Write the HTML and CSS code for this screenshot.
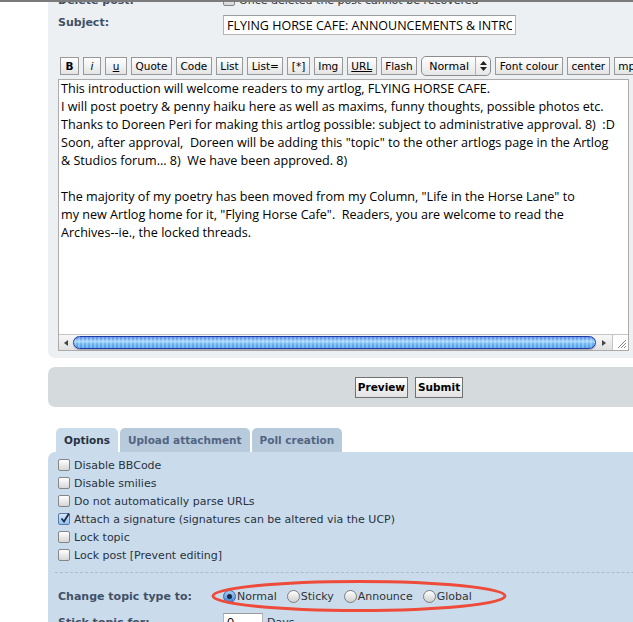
FILE: index.html
```html
<!DOCTYPE html>
<html lang="en">
<head>
  <meta charset="UTF-8" />
  <title>Post a new topic</title>
  <link rel="stylesheet" href="styles.css">
</head>
<body>

  <div class="viewport">
    <div class="page">

      <form class="post-panel">
        <div class="field field--cut">
          <span class="label">Delete post:</span>
          <span class="control"><span class="checkbox"></span>Once deleted the post cannot be recovered</span>
        </div>

        <div class="field field--subject">
          <label class="label" for="subject">Subject:</label>
          <input class="inputbox" id="subject" type="text" value="FLYING HORSE CAFE: ANNOUNCEMENTS &amp; INTRODUCTION">
        </div>

        <div class="toolbar">
          <button type="button" class="btn btn--b">B</button>
          <button type="button" class="btn btn--i">i</button>
          <button type="button" class="btn btn--u">u</button>
          <button type="button" class="btn">Quote</button>
          <button type="button" class="btn">Code</button>
          <button type="button" class="btn">List</button>
          <button type="button" class="btn">List=</button>
          <button type="button" class="btn">[*]</button>
          <button type="button" class="btn">Img</button>
          <button type="button" class="btn btn--url">URL</button>
          <button type="button" class="btn">Flash</button>
          <span class="select">
            <span class="select__value">Normal</span>
            <span class="select__arrows">
              <svg width="7" height="10" viewBox="0 0 7 10"><polygon points="3.5,0 7,4 0,4" /><polygon points="0,6 7,6 3.5,10" /></svg>
            </span>
          </span>
          <button type="button" class="btn">Font colour</button>
          <button type="button" class="btn">center</button>
          <button type="button" class="btn">mp3</button>
        </div>

        <div class="editor">
<div class="editor__text">This introduction will welcome readers to my artlog, FLYING HORSE CAFE.
I will post poetry &amp; penny haiku here as well as maxims, funny thoughts, possible photos etc.
Thanks to Doreen Peri for making this artlog possible: subject to administrative approval. 8)  :D
Soon, after approval,  Doreen will be adding this "topic" to the other artlogs page in the Artlog
&amp; Studios forum... 8)  We have been approved. 8)

The majority of my poetry has been moved from my Column, "Life in the Horse Lane" to
my new Artlog home for it, "Flying Horse Cafe".  Readers, you are welcome to read the
Archives--ie., the locked threads.</div>
          <div class="hscroll">
            <span class="hscroll__arrow hscroll__arrow--left"></span>
            <span class="hscroll__thumb"></span>
            <span class="hscroll__arrow hscroll__arrow--right"></span>
            <span class="hscroll__grip">
              <svg width="9" height="9" viewBox="0 0 9 9"><path d="M1 9 L9 1 M4 9 L9 4 M7 9 L9 7" /></svg>
            </span>
          </div>
        </div>
      </form>

      <div class="submit-panel">
        <button type="button" class="button2">Preview</button>
        <button type="button" class="button2">Submit</button>
      </div>

      <ul class="tabs">
        <li class="tab tab--active">Options</li>
        <li class="tab">Upload attachment</li>
        <li class="tab">Poll creation</li>
      </ul>

      <div class="options-panel">
        <div class="check-row"><span class="checkbox"></span>Disable BBCode</div>
        <div class="check-row"><span class="checkbox"></span>Disable smilies</div>
        <div class="check-row"><span class="checkbox"></span>Do not automatically parse URLs</div>
        <div class="check-row">
          <span class="checkbox checkbox--on">
            <svg width="10" height="10" viewBox="0 0 10 10"><path d="M1.5 5.5 L4 8.5 L9 0.5" /></svg>
          </span>Attach a signature (signatures can be altered via the UCP)
        </div>
        <div class="check-row"><span class="checkbox"></span>Lock topic</div>
        <div class="check-row"><span class="checkbox"></span>Lock post [Prevent editing]</div>

        <hr class="options-sep">

        <div class="field field--type">
          <span class="label">Change topic type to:</span>
          <span class="radios">
            <span class="radio-item"><span class="radio radio--on"></span>Normal</span>
            <span class="radio-item"><span class="radio"></span>Sticky</span>
            <span class="radio-item"><span class="radio"></span>Announce</span>
            <span class="radio-item"><span class="radio"></span>Global</span>
          </span>
        </div>

        <div class="field field--stick">
          <span class="label">Stick topic for:</span>
          <span class="control"><input class="inputbox inputbox--small" type="text" value="0"> Days</span>
        </div>

        <!-- hand-drawn ring around the topic type choices -->
        <svg class="ring" width="299" height="35" viewBox="0 0 299 35">
          <ellipse cx="149" cy="17" rx="146" ry="14.5" />
        </svg>
      </div>

    </div>
  </div>

</body>
</html>
```

FILE: styles.css
```css
html, body {
  margin: 0;
  padding: 0;
}

body {
  background: #fff;
  border-top: 2px solid #7b7b7b;
  font: 11px "DejaVu Sans", Verdana, sans-serif;
  color: #333;
}

.viewport {
  height: 620px;
  overflow: hidden;
}

.page {
  width: 722px;
  padding-left: 48px;
}

/* top panel: subject, bbcode bar, message box */
.post-panel {
  margin: 0;
  background: #ecf0f3;
  border-radius: 0 0 0 7px;
  padding: 0 0 7px 10px;
}

.field {
  display: grid;
  grid-template-columns: 165px auto;
  align-items: center;
}

.field--cut {
  height: 18px;
  margin-top: -11px;
}

.field--subject {
  margin-top: 6px;
  align-items: start;
}

.field--subject .label {
  padding-top: 1px;
}

.label {
  font-weight: bold;
  color: #425067;
}

.control {
  display: flex;
  align-items: center;
  gap: 4px;
}

.inputbox {
  box-sizing: border-box;
  width: 293px;
  height: 20px;
  margin: 0;
  padding: 0 3px;
  border: 1px solid #b4b4b4;
  border-top-color: #9c9c9c;
  background: #fff;
  font: 12.5px "Open Sans", sans-serif;
  color: #000;
  outline: none;
}

.inputbox--small {
  width: 40px;
  height: 18px;
}

.toolbar {
  display: flex;
  align-items: center;
  gap: 4px;
  margin-top: 21px;
  padding-left: 2px;
  white-space: nowrap;
}

.btn {
  box-sizing: border-box;
  height: 18px;
  margin: 0;
  padding: 0 3.5px;
  border: 1px solid #999;
  border-radius: 0;
  background: linear-gradient(#fff, #e4e4e4);
  font: 10.5px "DejaVu Sans", sans-serif;
  color: #000;
}

.btn--b { width: 19px; font-weight: bold; }
.btn--i { width: 18px; font-style: italic; }
.btn--u { width: 22px; text-decoration: underline; }
.btn--url { text-decoration: underline; }

.select {
  box-sizing: border-box;
  display: flex;
  align-items: center;
  width: 70px;
  height: 20px;
  border: 1px solid #8c8c8c;
  border-radius: 5px;
  background: linear-gradient(#fefefe, #e6e6e6);
  font: 11px "DejaVu Sans", sans-serif;
  color: #000;
}

.select__value {
  flex: 1;
  padding-left: 7px;
}

.select__arrows {
  display: flex;
  align-items: center;
  justify-content: center;
  width: 14px;
  height: 100%;
  border-left: 1px solid #b0b0b0;
}

.select__arrows svg {
  fill: #222;
}

.editor {
  box-sizing: border-box;
  display: flex;
  flex-direction: column;
  width: 571px;
  height: 272px;
  margin-top: 3px;
  border: 1px solid #ababab;
  background: #fff;
}

.editor__text {
  flex: 1;
  padding: 0 2px;
  font: 12.6px/18px "Open Sans", sans-serif;
  color: #000;
  white-space: pre;
  overflow: hidden;
}

.hscroll {
  display: flex;
  height: 15px;
  border-top: 1px solid #c4c4c4;
  background: linear-gradient(#f8f8f8, #e0e0e0);
}

.hscroll__arrow {
  display: flex;
  align-items: center;
  justify-content: center;
}

.hscroll__arrow::before {
  content: "";
  border-top: 3px solid transparent;
  border-bottom: 3px solid transparent;
}

.hscroll__arrow--left {
  width: 14px;
}

.hscroll__arrow--left::before {
  border-right: 4px solid #444;
}

.hscroll__arrow--right {
  width: 16px;
  border-right: 1px solid #c4c4c4;
}

.hscroll__arrow--right::before {
  border-left: 4px solid #444;
}

.hscroll__thumb {
  flex: 1;
  margin: 1px 0;
  border: 1px solid #2339a8;
  border-radius: 7px;
  background:
    repeating-linear-gradient(90deg, rgba(255, 255, 255, 0.25) 0 2px, rgba(255, 255, 255, 0) 2px 4px),
    linear-gradient(#4a86e4, #a8d8ff 40%, #6fb8f4 60%, #4b9ae8);
  box-shadow: 0 1px 1px rgba(0, 0, 0, 0.25);
}

.hscroll__grip {
  display: flex;
  align-items: flex-end;
  justify-content: flex-end;
  width: 15px;
  padding: 0 2px 2px 0;
  box-sizing: border-box;
  background: #fff;
}

.hscroll__grip svg {
  stroke: #888;
  stroke-width: 1;
}

/* preview / submit bar */
.submit-panel {
  display: flex;
  align-items: center;
  justify-content: center;
  gap: 7px;
  height: 40px;
  margin-top: 9px;
  border-radius: 7px;
  background: #d5dbdd;
}

.button2 {
  box-sizing: border-box;
  height: 21px;
  margin: 0;
  padding: 0 2px;
  border: 1px solid #707070;
  border-radius: 0;
  background: linear-gradient(#fff, #e2e2e2);
  font: bold 10.5px "DejaVu Sans", sans-serif;
  color: #000;
}

/* option tabs */
.tabs {
  display: flex;
  gap: 2px;
  margin: 21px 0 0 8px;
  padding: 0;
  list-style: none;
}

.tab {
  height: 24px;
  padding: 0 8px;
  line-height: 25px;
  border-radius: 5px 5px 0 0;
  background: #b8cbdc;
  color: #536482;
  font-size: 10.5px;
  font-weight: bold;
}

.tab--active {
  background: #cadceb;
  color: #28313f;
}

.options-panel {
  position: relative;
  height: 200px;
  padding: 4px 0 0 10px;
  border-radius: 7px 0 0 0;
  background: #cadceb;
  color: #28313f;
}

.check-row {
  display: flex;
  align-items: center;
  gap: 4px;
  height: 18px;
}

.checkbox {
  box-sizing: border-box;
  display: flex;
  align-items: center;
  justify-content: center;
  flex: none;
  width: 12px;
  height: 12px;
  border: 1px solid #858585;
  border-radius: 2px;
  background: linear-gradient(#fff, #d6d6d6);
}

.checkbox--on {
  background: linear-gradient(#d6e8fb, #8fc2f2);
  border-color: #5b77a6;
}

.checkbox--on svg {
  margin: -2px -2px 0 0;
  fill: none;
  stroke: #1d2b4a;
  stroke-width: 1.8;
}

.options-sep {
  height: 0;
  margin: 8px 0 0 -3px;
  border: 0;
  border-top: 1px dashed #adbcc8;
}

.field--type {
  height: 18px;
  margin-top: 14px;
}

.radios {
  display: flex;
  gap: 10px;
}

.radio-item {
  display: flex;
  align-items: center;
  gap: 1px;
  color: #333;
}

.radio {
  box-sizing: border-box;
  display: flex;
  align-items: center;
  justify-content: center;
  width: 13px;
  height: 13px;
  border: 1px solid #7d7d7d;
  border-radius: 50%;
  background: linear-gradient(#fff, #d0d0d0);
}

.radio--on {
  border-color: #45669c;
  background: linear-gradient(#a7cdf5, #3f85d6);
}

.radio--on::after {
  content: "";
  width: 5px;
  height: 5px;
  border-radius: 50%;
  background: #1a2a44;
}

.field--stick {
  height: 18px;
  margin-top: 8px;
}

.ring {
  position: absolute;
  left: 162px;
  top: 127px;
  fill: none;
  stroke: #ee4b3b;
  stroke-width: 3;
}
```
